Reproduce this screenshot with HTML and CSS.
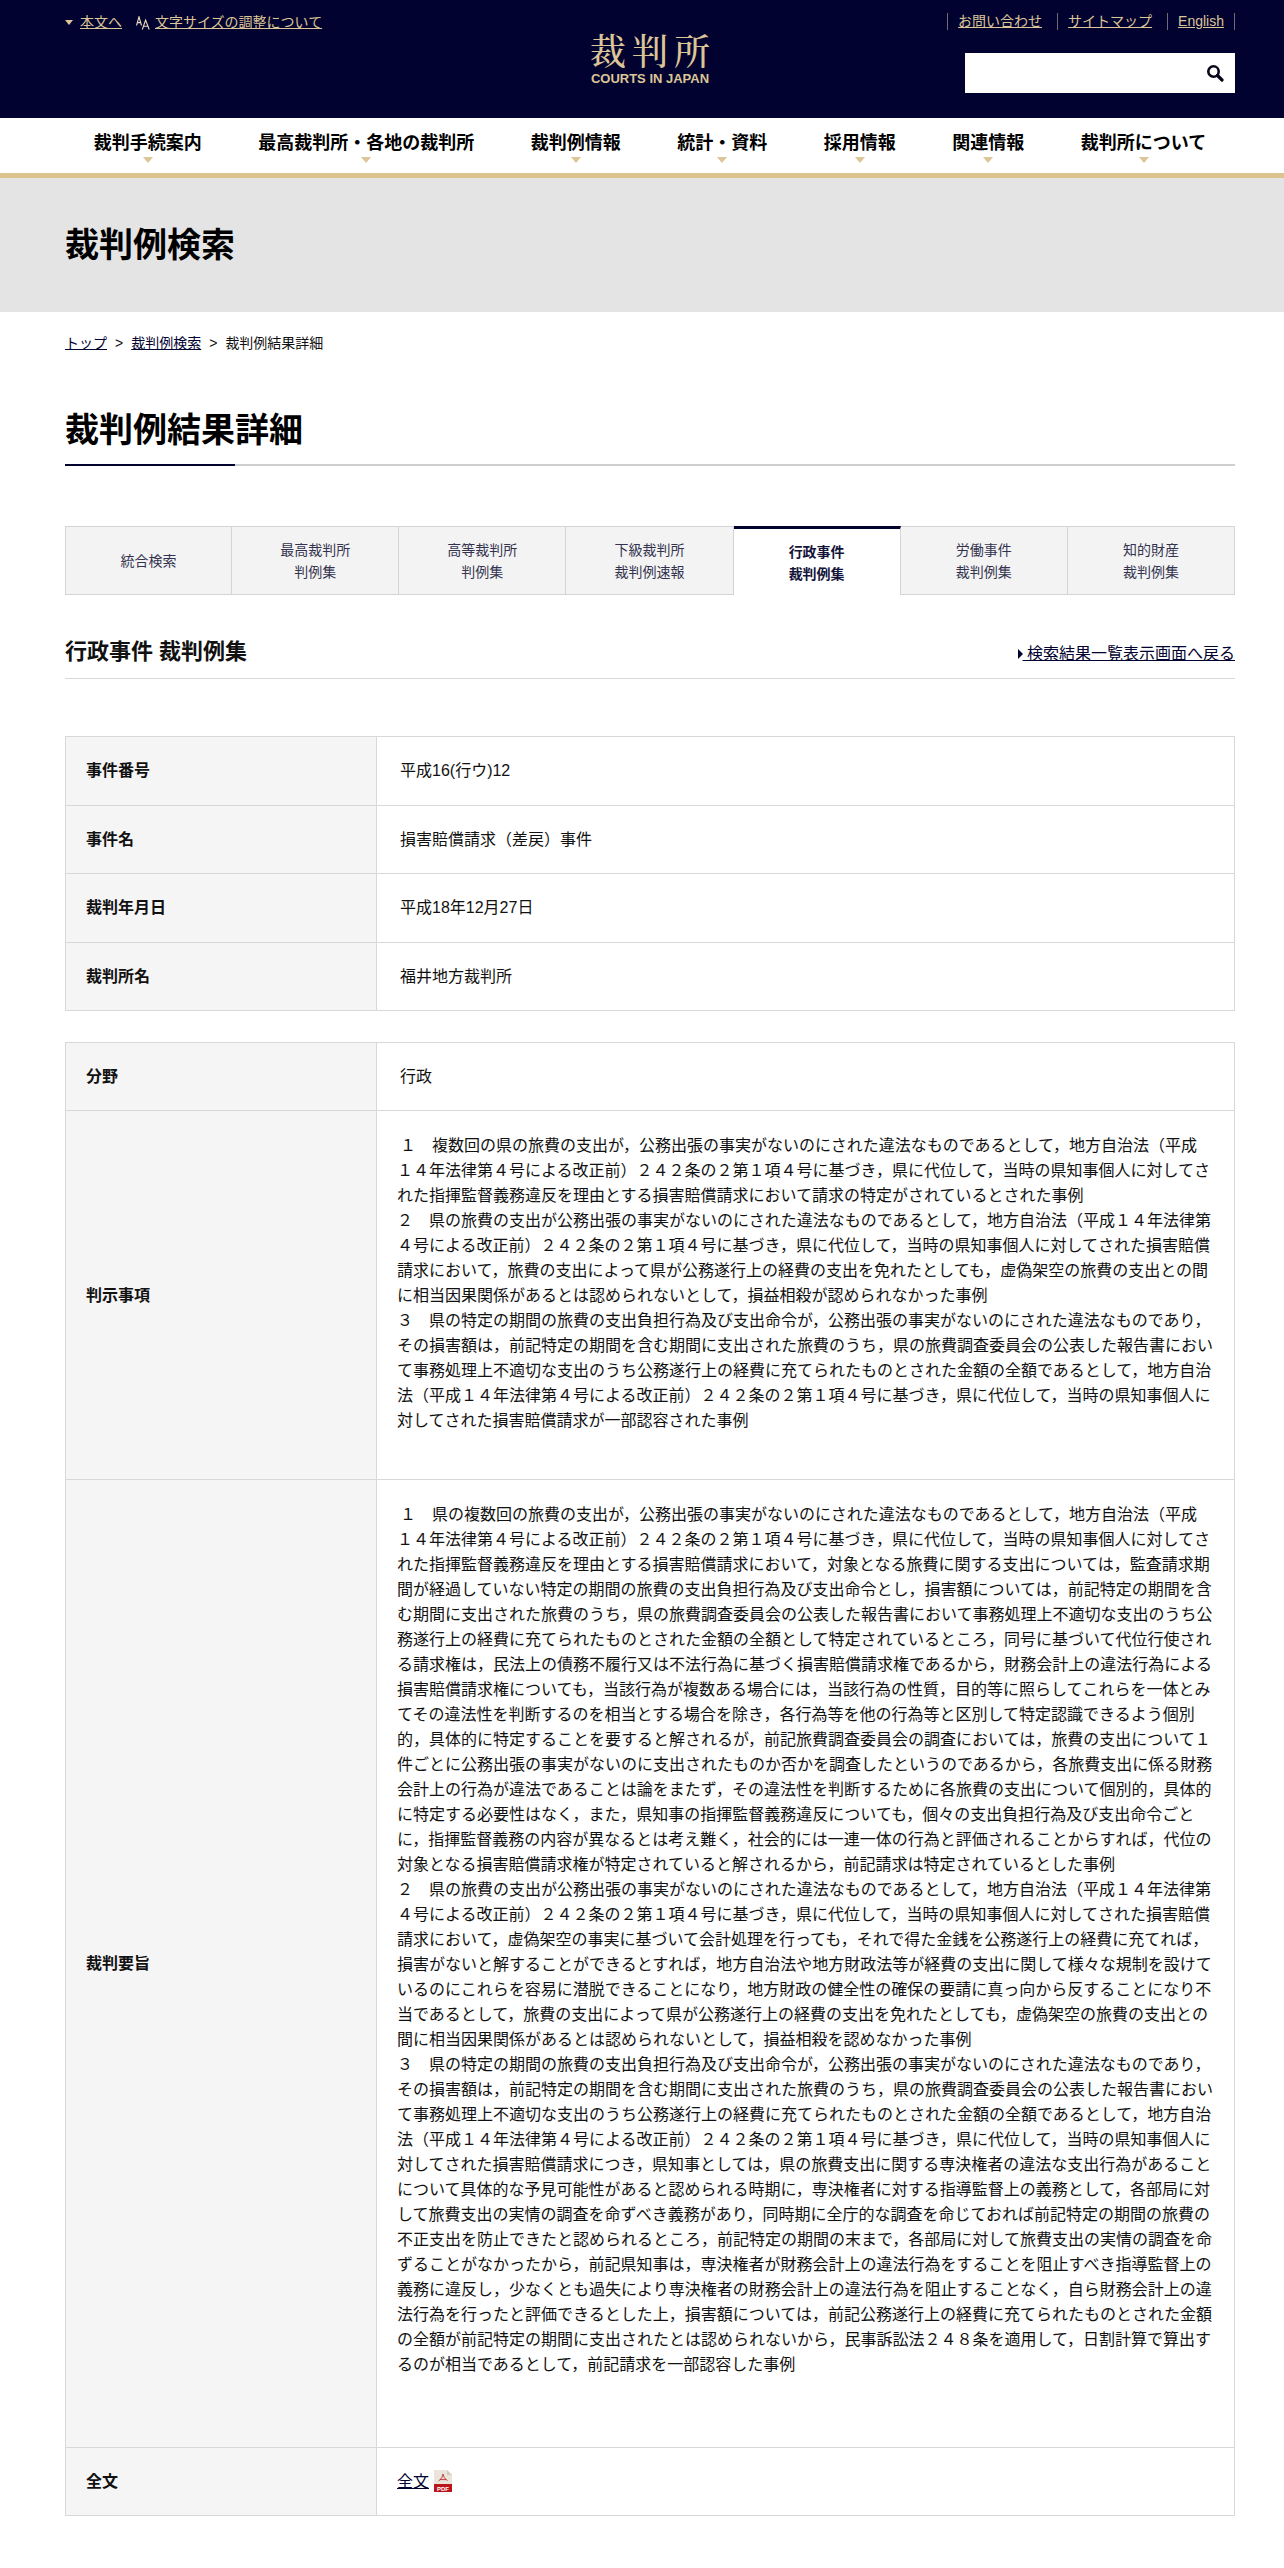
FILE: index.html
```html
<!DOCTYPE html>
<html lang="ja">
<head>
<meta charset="utf-8">
<title>裁判例結果詳細</title>
<link rel="stylesheet" href="styles.css">
</head>
<body>
<header class="top">
  <div class="top-inner">
    <div class="top-left">
      <span class="tri-down"></span><a href="#">本文へ</a>
      <svg class="aa" width="14" height="14" viewBox="0 0 14 14" fill="none" stroke="#ece0bf" stroke-width="1.1"><path d="M0.5 9.5L3 0.8L5.5 9.5M1.3 6.6H4.7"/><path d="M6.3 13.5L9.6 4L13.2 13.5M7.4 10.3H12.1"/></svg>
      <a href="#">文字サイズの調整について</a>
    </div>
    <div class="logo">
      <span class="logo-ja">裁判所</span>
      <span class="logo-en">COURTS IN JAPAN</span>
    </div>
    <div class="top-right">
      <ul class="util">
        <li><a href="#">お問い合わせ</a></li>
        <li><a href="#">サイトマップ</a></li>
        <li><a href="#">English</a></li>
      </ul>
      <div class="search">
        <svg width="18" height="18" viewBox="0 0 18 18" fill="none" stroke="#08081c"><circle cx="7.5" cy="7.5" r="5.2" stroke-width="2.6"/><path d="M11.5 11.5L16 16" stroke-width="3.2" stroke-linecap="round"/></svg>
      </div>
    </div>
  </div>
</header>
<nav class="gnav">
  <a href="#">裁判手続案内</a>
  <a href="#">最高裁判所・各地の裁判所</a>
  <a href="#">裁判例情報</a>
  <a href="#">統計・資料</a>
  <a href="#">採用情報</a>
  <a href="#">関連情報</a>
  <a href="#">裁判所について</a>
</nav>
<div class="band"><h1>裁判例検索</h1></div>
<main class="wrap">
  <p class="crumbs"><a href="#">トップ</a><span class="sep">&gt;</span><a href="#">裁判例検索</a><span class="sep">&gt;</span>裁判例結果詳細</p>
  <h2 class="page-title">裁判例結果詳細</h2>
  <ul class="tabs">
    <li><a href="#">統合検索</a></li>
    <li><a href="#">最高裁判所<br>判例集</a></li>
    <li><a href="#">高等裁判所<br>判例集</a></li>
    <li><a href="#">下級裁判所<br>裁判例速報</a></li>
    <li class="on"><a href="#">行政事件<br>裁判例集</a></li>
    <li><a href="#">労働事件<br>裁判例集</a></li>
    <li><a href="#">知的財産<br>裁判例集</a></li>
  </ul>
  <div class="sec-head">
    <h3>行政事件 裁判例集</h3>
    <a class="back" href="#">&nbsp;検索結果一覧表示画面へ戻る</a>
  </div>
  <table class="info first">
    <tr class="r1"><th>事件番号</th><td class="ind">平成16(行ウ)12</td></tr>
    <tr class="r1"><th>事件名</th><td class="ind">損害賠償請求（差戻）事件</td></tr>
    <tr class="r1"><th>裁判年月日</th><td class="ind">平成18年12月27日</td></tr>
    <tr class="r1"><th>裁判所名</th><td class="ind">福井地方裁判所</td></tr>
  </table>
  <table class="info second">
    <tr class="r-short"><th>分野</th><td class="ind">行政</td></tr>
    <tr class="r-mid"><th>判示事項</th><td class="ind">１　複数回の県の旅費の支出が，公務出張の事実がないのにされた違法なものであるとして，地方自治法（平成<br>１４年法律第４号による改正前）２４２条の２第１項４号に基づき，県に代位して，当時の県知事個人に対してされた指揮監督義務違反を理由とする損害賠償請求において請求の特定がされているとされた事例<br>２　県の旅費の支出が公務出張の事実がないのにされた違法なものであるとして，地方自治法（平成１４年法律第４号による改正前）２４２条の２第１項４号に基づき，県に代位して，当時の県知事個人に対してされた損害賠償請求において，旅費の支出によって県が公務遂行上の経費の支出を免れたとしても，虚偽架空の旅費の支出との間に相当因果関係があるとは認められないとして，損益相殺が認められなかった事例<br>３　県の特定の期間の旅費の支出負担行為及び支出命令が，公務出張の事実がないのにされた違法なものであり，その損害額は，前記特定の期間を含む期間に支出された旅費のうち，県の旅費調査委員会の公表した報告書において事務処理上不適切な支出のうち公務遂行上の経費に充てられたものとされた金額の全額であるとして，地方自治法（平成１４年法律第４号による改正前）２４２条の２第１項４号に基づき，県に代位して，当時の県知事個人に対してされた損害賠償請求が一部認容された事例<br><br></td></tr>
    <tr><th>裁判要旨</th><td class="ind long">１　県の複数回の旅費の支出が，公務出張の事実がないのにされた違法なものであるとして，地方自治法（平成<br>１４年法律第４号による改正前）２４２条の２第１項４号に基づき，県に代位して，当時の県知事個人に対してされた指揮監督義務違反を理由とする損害賠償請求において，対象となる旅費に関する支出については，監査請求期間が経過していない特定の期間の旅費の支出負担行為及び支出命令とし，損害額については，前記特定の期間を含む期間に支出された旅費のうち，県の旅費調査委員会の公表した報告書において事務処理上不適切な支出のうち公務遂行上の経費に充てられたものとされた金額の全額として特定されているところ，同号に基づいて代位行使される請求権は，民法上の債務不履行又は不法行為に基づく損害賠償請求権であるから，財務会計上の違法行為による損害賠償請求権についても，当該行為が複数ある場合には，当該行為の性質，目的等に照らしてこれらを一体とみてその違法性を判断するのを相当とする場合を除き，各行為等を他の行為等と区別して特定認識できるよう個別的，具体的に特定することを要すると解されるが，前記旅費調査委員会の調査においては，旅費の支出について１件ごとに公務出張の事実がないのに支出されたものか否かを調査したというのであるから，各旅費支出に係る財務会計上の行為が違法であることは論をまたず，その違法性を判断するために各旅費の支出について個別的，具体的に特定する必要性はなく，また，県知事の指揮監督義務違反についても，個々の支出負担行為及び支出命令ごとに，指揮監督義務の内容が異なるとは考え難く，社会的には一連一体の行為と評価されることからすれば，代位の対象となる損害賠償請求権が特定されていると解されるから，前記請求は特定されているとした事例<br>２　県の旅費の支出が公務出張の事実がないのにされた違法なものであるとして，地方自治法（平成１４年法律第４号による改正前）２４２条の２第１項４号に基づき，県に代位して，当時の県知事個人に対してされた損害賠償請求において，虚偽架空の事実に基づいて会計処理を行っても，それで得た金銭を公務遂行上の経費に充てれば，損害がないと解することができるとすれば，地方自治法や地方財政法等が経費の支出に関して様々な規制を設けているのにこれらを容易に潜脱できることになり，地方財政の健全性の確保の要請に真っ向から反することになり不当であるとして，旅費の支出によって県が公務遂行上の経費の支出を免れたとしても，虚偽架空の旅費の支出との間に相当因果関係があるとは認められないとして，損益相殺を認めなかった事例<br>３　県の特定の期間の旅費の支出負担行為及び支出命令が，公務出張の事実がないのにされた違法なものであり，その損害額は，前記特定の期間を含む期間に支出された旅費のうち，県の旅費調査委員会の公表した報告書において事務処理上不適切な支出のうち公務遂行上の経費に充てられたものとされた金額の全額であるとして，地方自治法（平成１４年法律第４号による改正前）２４２条の２第１項４号に基づき，県に代位して，当時の県知事個人に対してされた損害賠償請求につき，県知事としては，県の旅費支出に関する専決権者の違法な支出行為があることについて具体的な予見可能性があると認められる時期に，専決権者に対する指導監督上の義務として，各部局に対して旅費支出の実情の調査を命ずべき義務があり，同時期に全庁的な調査を命じておれば前記特定の期間の旅費の不正支出を防止できたと認められるところ，前記特定の期間の末まで，各部局に対して旅費支出の実情の調査を命ずることがなかったから，前記県知事は，専決権者が財務会計上の違法行為をすることを阻止すべき指導監督上の義務に違反し，少なくとも過失により専決権者の財務会計上の違法行為を阻止することなく，自ら財務会計上の違法行為を行ったと評価できるとした上，損害額については，前記公務遂行上の経費に充てられたものとされた金額の全額が前記特定の期間に支出されたとは認められないから，民事訴訟法２４８条を適用して，日割計算で算出するのが相当であるとして，前記請求を一部認容した事例<br><br></td></tr>
    <tr><th>全文</th><td><a href="#" class="full">全文</a><svg class="pdf" width="18" height="22" viewBox="0 0 18 22"><path d="M0 0H13L18 5V22H0Z" fill="#e9e5da"/><path d="M13 0L18 5H13Z" fill="#cfcabd"/><path d="M0 14H18V22H0Z" fill="#b9151b"/><path d="M9 4C8.6 6.5 7.4 9 4.5 11M9 4C9.4 6.5 10.8 9 13.5 10.5M6 9.6H12" fill="none" stroke="#b9151b" stroke-width=".8"/><text x="9" y="20.5" text-anchor="middle" class="pdf-t">PDF</text></svg></td></tr>
  </table>
</main>
</body>
</html>
```
FILE: styles.css
```css
* { box-sizing: border-box; }
html, body { margin: 0; padding: 0; }
body {
  font-family: "Liberation Sans", "Noto Sans CJK JP", sans-serif;
  font-size: 16px;
  line-height: 25px;
  color: #111;
  background: #fff;
}
a { color: #020230; }
ul { list-style: none; margin: 0; padding: 0; }
h1, h2, h3, p { margin: 0; }

.top { background: #020230; height: 118px; }
.top-inner {
  width: 1170px;
  margin-left: 65px;
  height: 118px;
  display: grid;
  grid-template-columns: 1fr 120px 1fr;
  font-size: 14px;
  line-height: 18px;
  color: #dcc596;
}
.top-inner a { color: #dcc596; }
.top-left { display: flex; align-items: center; height: 18px; margin-top: 13px; }
.tri-down {
  width: 0; height: 0;
  border-left: 4px solid transparent;
  border-right: 4px solid transparent;
  border-top: 5px solid #dcc596;
  margin-right: 7px;
}
.aa { margin: 2px 5px 0 14px; }
.logo { display: flex; flex-direction: column; align-items: center; padding-top: 30px; }
.logo-ja {
  font-family: "Noto Serif CJK JP", "Noto Sans CJK JP", serif;
  font-size: 36px;
  font-weight: 500;
  line-height: 40px;
  letter-spacing: 6px;
  margin-right: -6px;
  white-space: nowrap;
}
.logo-en {
  font-size: 13px;
  line-height: 14px;
  margin-top: 2px;
  white-space: nowrap;
  font-weight: 700;
}
.top-right { display: flex; flex-direction: column; align-items: flex-end; padding-top: 13px; }
.util { display: flex; height: 17px; }
.util li { border-left: 1px solid #6f6c74; padding: 0 15px 0 10px; line-height: 17px; }
.util li:last-child { border-right: 1px solid #6f6c74; padding-right: 10px; }
.search {
  width: 270px; height: 40px;
  margin-top: 23px;
  background: #fff;
  display: flex; align-items: center; justify-content: flex-end;
  padding-right: 11px;
}

.gnav {
  height: 60px;
  border-bottom: 5px solid #dcc38f;
  display: flex;
  justify-content: center;
  gap: 56.5px;
  padding: 13px 0 0 16px;
}
.gnav a {
  position: relative;
  color: #000;
  text-decoration: none;
  font-size: 18px;
  font-weight: 700;
  line-height: 24px;
  height: 24px;
}
.gnav a::after {
  content: "";
  position: absolute;
  left: 50%;
  top: 26px;
  margin-left: -5px;
  border-left: 5px solid transparent;
  border-right: 5px solid transparent;
  border-top: 6px solid #dcc596;
}

.band { background: #e4e4e4; height: 134px; display: flex; align-items: center; padding-left: 65px; }
.band h1 { font-size: 34px; line-height: 44px; color: #000; }

.wrap { width: 1170px; margin-left: 65px; }
.crumbs { font-size: 14px; line-height: 20px; padding-top: 21px; }
.crumbs .sep { margin: 0 8px; }
.page-title {
  margin-top: 55px;
  font-size: 34px;
  line-height: 44px;
  color: #000;
  padding-bottom: 12px;
  border-bottom: 2px solid #cfcfcf;
  position: relative;
}
.page-title::after {
  content: "";
  position: absolute;
  left: 0; bottom: -2px;
  width: 170px; height: 2px;
  background: #020230;
}
.tabs { display: grid; grid-template-columns: repeat(7, 1fr); margin-top: 60px; height: 69px; }
.tabs li {
  background: #f3f3f3;
  border: 1px solid #d4d4d4;
  border-left-width: 0;
  display: flex; align-items: center; justify-content: center;
  text-align: center;
  font-size: 14px;
  line-height: 22px;
}
.tabs li:first-child { border-left-width: 1px; }
.tabs a { color: #33334f; text-decoration: none; }
.tabs .on { background: #fff; border-top: 3px solid #020230; border-bottom: 0; padding-top: 1px; }
.tabs .on a { color: #14143a; font-weight: 700; }
.sec-head {
  margin-top: 39px;
  height: 45px;
  border-bottom: 1px solid #d8d8d8;
  display: flex;
  justify-content: space-between;
  align-items: flex-start;
}
.sec-head h3 { font-size: 22px; line-height: 36px; color: #111; }
.back { position: relative; font-size: 16px; line-height: 36px; margin-top: 2px; }
.back::before {
  content: "";
  position: absolute;
  left: -5px; top: 13px;
  border-top: 5px solid transparent;
  border-bottom: 5px solid transparent;
  border-left: 5px solid #020230;
}

.info { width: 100%; border-collapse: collapse; table-layout: fixed; }
.first { margin-top: 57px; }
.second { margin-top: 31px; }
.info th, .info td { border: 1px solid #d8d8d8; padding: 21px 21px 21px 20px; vertical-align: middle; }
.info th { width: 311px; background: #f5f5f5; text-align: left; font-weight: 700; color: #111; }
.r1 th, .r1 td { height: 68.5px; }
.info .r-short td { padding-top: 20px; }
.info .r-mid td { padding-top: 22px; }
.ind { text-indent: 3px; }
.info .long { padding-top: 22px; padding-bottom: 45px; }
.full { margin-right: 5px; }
.pdf { vertical-align: middle; margin-top: -4px; }
.pdf-t { font: 700 6px "Liberation Sans", sans-serif; fill: #fff; }
```
